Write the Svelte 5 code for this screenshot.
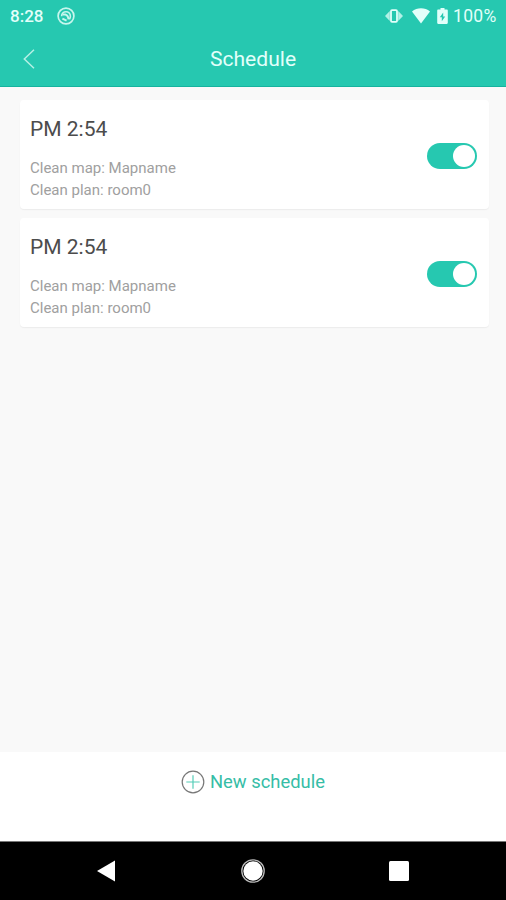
<script>
  let schedules = $state([
    { time: "PM 2:54", map: "Mapname", plan: "room0", enabled: true },
    { time: "PM 2:54", map: "Mapname", plan: "room0", enabled: true },
  ]);
</script>

<div class="screen">
  <header>
    <div class="status">
      <span class="clock">8:28</span>
      <svg class="cast" width="18" height="18" viewBox="0 0 18 18" fill="none" stroke="currentColor">
        <circle cx="9" cy="9" r="7.9" stroke-width="1.7" />
        <path d="M4.6 9.2C4.6 3.2 13.4 3.2 13.4 9.2c0 1.3-.4 2.2-1 3" stroke-width="1.6" />
        <path d="M5.4 7.6h3.2c1.7.6 2.8 2.2 3 4.8M5.4 11.6l4.2 2" stroke-width="2" />
      </svg>
      <div class="indicators">
        <svg width="18" height="14" viewBox="0 0 18 14">
          <path d="M4.8 2v10L0 7zM13.2 2v10L18 7z" fill="currentColor" opacity=".75" />
          <rect x="6" y="1.2" width="6" height="11.6" rx="1" fill="none" stroke="currentColor" stroke-width="1.8" />
        </svg>
        <svg width="18" height="16" viewBox="0 0 18 16">
          <path d="M0 3.6C5-.8 13-.8 18 3.6L9 15.6z" fill="currentColor" />
        </svg>
        <svg width="11" height="16" viewBox="0 0 11 16">
          <path
            d="M3.5 0h4v1.6h2.2c.7 0 1.1.4 1.1 1.1v12.1c0 .7-.4 1.2-1.1 1.2H1.3c-.7 0-1.1-.5-1.1-1.2V2.7c0-.7.4-1.1 1.1-1.1h2.2zM6.2 4.5L2.8 9.3h2v4L8.2 8.4h-2z"
            fill="currentColor"
            fill-rule="evenodd"
          />
        </svg>
        <span class="percent">100%</span>
      </div>
    </div>
    <div class="toolbar">
      <button class="back" aria-label="Back">
        <svg width="12" height="20" viewBox="0 0 12 20" fill="none" stroke="currentColor" stroke-width="1.5">
          <path d="M11 .7L1.3 10l9.7 9.3" />
        </svg>
      </button>
      <h1>Schedule</h1>
    </div>
  </header>

  <main>
    {#each schedules as item}
      <section class="card">
        <div>
          <h2>{item.time}</h2>
          <p>Clean map: {item.map}</p>
          <p>Clean plan: {item.plan}</p>
        </div>
        <button
          class="switch"
          class:on={item.enabled}
          role="switch"
          aria-checked={item.enabled}
          aria-label="Enable schedule"
          onclick={() => (item.enabled = !item.enabled)}
        >
          <span class="knob"></span>
        </button>
      </section>
    {/each}
  </main>

  <footer>
    <button class="add">
      <svg width="24" height="24" viewBox="0 0 24 24" fill="none">
        <circle cx="12" cy="12" r="10.8" stroke="#777" stroke-width="1.2" />
        <path d="M12 5.3v13.4M5.3 12h13.4" stroke="#55cdb8" stroke-width="1.2" />
      </svg>
      <span>New schedule</span>
    </button>
  </footer>

  <nav>
    <svg width="18" height="22" viewBox="0 0 18 22"><path d="M18 .5v21L0 11z" fill="#fff" /></svg>
    <svg class="home" width="24" height="24" viewBox="0 0 24 24">
      <circle cx="12" cy="12" r="11.2" fill="none" stroke="#bbb" stroke-width="1.3" />
      <circle cx="12" cy="12" r="9.7" fill="#fff" />
    </svg>
    <svg width="20" height="20" viewBox="0 0 20 20"><rect width="20" height="20" rx="1.5" fill="#fff" /></svg>
  </nav>
</div>

<style>
  :global(body) {
    margin: 0;
  }

  .screen {
    display: flex;
    flex-direction: column;
    height: 900px;
    font-family: Roboto, sans-serif;
    background: #f9f9f9;
  }

  button {
    padding: 0;
    border: none;
    background: none;
    font: inherit;
    color: inherit;
  }

  svg {
    display: block;
  }

  h1,
  h2,
  p {
    margin: 0;
    font-weight: 400;
    white-space: nowrap;
  }

  header {
    box-sizing: border-box;
    height: 87px;
    background: #26c8b0;
    border-bottom: 1px solid #16b39f;
    color: #e2fffa;
  }

  .status {
    display: flex;
    align-items: center;
    height: 31px;
    padding: 0 9px 0 10px;
  }

  .clock {
    width: 47px;
    font-size: 17px;
    font-weight: 500;
  }

  .cast {
    color: #c8f6ed;
  }

  .indicators {
    display: flex;
    align-items: center;
    margin-left: auto;
  }

  .indicators svg:nth-child(2) {
    margin: 0 7px 0 9px;
  }

  .percent {
    width: 44px;
    margin-left: 5px;
    font-size: 17.5px;
    letter-spacing: 0.3px;
  }

  .toolbar {
    display: grid;
    grid-template-columns: 60px 1fr 60px;
    align-items: center;
    height: 55px;
  }

  .back {
    padding-left: 23px;
    color: #b5f0e5;
  }

  h1 {
    text-align: center;
    font-size: 21.1px;
    line-height: 24px;
  }

  main {
    flex: 1;
    padding: 13px 17px 0 20px;
  }

  .card {
    display: flex;
    justify-content: space-between;
    align-items: center;
    box-sizing: border-box;
    height: 109px;
    margin-bottom: 9px;
    padding: 0 12px 0 10px;
    background: #fff;
    border-radius: 4px;
    box-shadow: 0 1px 1px #ececec;
  }

  h2 {
    margin: 7px 0 15px;
    font-size: 21px;
    line-height: 26px;
    color: #4c4c4c;
  }

  p {
    font-size: 15px;
    line-height: 22px;
    color: #a0a0a0;
  }

  .switch {
    box-sizing: border-box;
    display: flex;
    width: 50px;
    height: 26px;
    margin-top: 3px;
    padding: 2px;
    border-radius: 13px;
    background: #ccc;
  }

  .switch.on {
    justify-content: flex-end;
    background: #26c8b0;
  }

  .knob {
    width: 22px;
    height: 22px;
    border-radius: 50%;
    background: #fff;
  }

  footer {
    box-sizing: border-box;
    height: 89px;
    padding-top: 18px;
    background: #fff;
  }

  .add {
    display: flex;
    align-items: center;
    gap: 5px;
    margin: 0 auto;
    font-size: 18.4px;
    line-height: 24px;
    color: #36bda6;
  }

  nav {
    box-sizing: border-box;
    display: flex;
    justify-content: space-between;
    align-items: center;
    height: 59px;
    padding: 0 97px;
    border-top: 1px solid #777;
    background: #000;
  }

  .home {
    margin-left: 2px;
  }
</style>
